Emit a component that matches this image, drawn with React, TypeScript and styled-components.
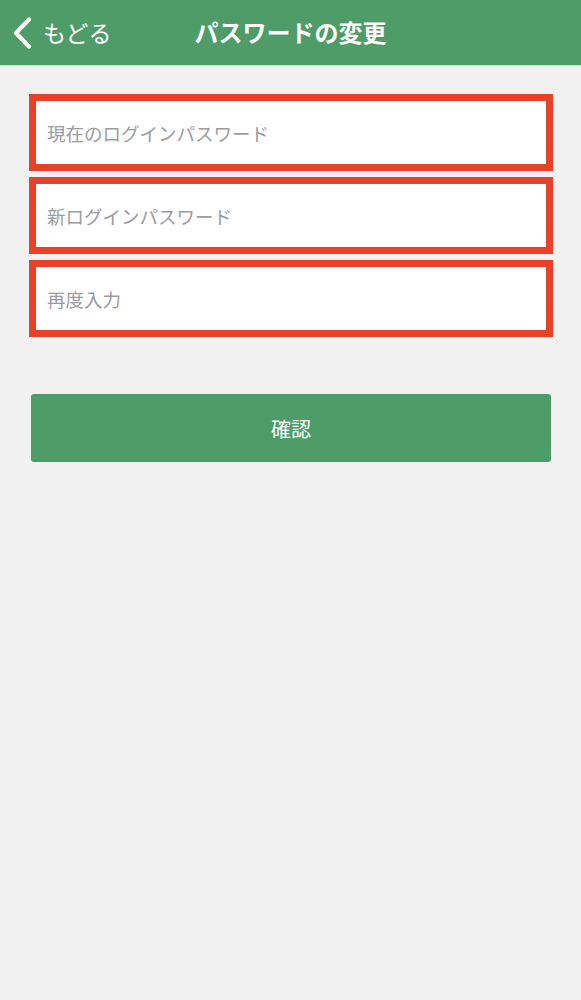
import React from 'react';
import styled, { createGlobalStyle } from 'styled-components';

const GlobalStyle = createGlobalStyle`
  html, body {
    margin: 0;
    padding: 0;
    background: #f1f1f1;
    font-family: "Noto Sans CJK JP", "Noto Sans", sans-serif;
  }
`;

const fields = ['現在のログインパスワード', '新ログインパスワード', '再度入力'];

const App: React.FC = () => {
  return (
    <>
      <GlobalStyle />
      <Page>
        <Header>
          <BackButton type="button">
            <svg width="22" height="32" viewBox="0 0 22 32" fill="none">
              <path d="M18 2.5 L5 16 L18 29.5" stroke="#fff" strokeWidth="4.2" strokeLinecap="round" strokeLinejoin="round" />
            </svg>
            <span>もどる</span>
          </BackButton>
          <Title>パスワードの変更</Title>
          <div />
        </Header>

        <Form>
          <FieldList>
            {fields.map((label) => (
              <Field key={label} type="password" placeholder={label} />
            ))}
          </FieldList>
          <SubmitButton type="button">確認</SubmitButton>
        </Form>
      </Page>
    </>
  );
};

export default App;

const Page = styled.div`
  min-height: 1000px;
  background: #f1f1f1;
`;

const Header = styled.header`
  height: 65px;
  background: #4e9d68;
  border-bottom: 1px solid #d4d4d4;
  display: grid;
  grid-template-columns: 1fr auto 1fr;
  align-items: center;
`;

const BackButton = styled.button`
  display: flex;
  align-items: center;
  gap: 10px;
  justify-self: start;
  padding: 0 0 0 11px;
  margin: 0;
  border: none;
  background: none;
  color: #fff;
  font-family: inherit;
  font-size: 23px;
  cursor: pointer;

  svg {
    display: block;
    margin-top: 1px;
  }

  span {
    line-height: 1;
    margin-top: -1px;
  }
`;

const Title = styled.h1`
  margin: 0;
  color: #fff;
  font-size: 24px;
  font-weight: bold;
  line-height: 1;
  margin-top: -1px;
`;

const Form = styled.div`
  padding: 28px 28px 0 29px;
`;

const FieldList = styled.div`
  display: flex;
  flex-direction: column;
  gap: 6px;
`;

const Field = styled.input`
  box-sizing: border-box;
  width: 100%;
  height: 77px;
  margin: 0;
  padding: 0 11px;
  border: 7px solid #e84127;
  background: #fff;
  font-family: inherit;
  font-size: 18.5px;
  color: #333;
  outline: none;

  &::placeholder {
    color: #9b9ba2;
  }
`;

const SubmitButton = styled.button`
  display: block;
  width: calc(100% - 4px);
  height: 68px;
  margin: 57px 0 0 2px;
  border: none;
  border-radius: 3px;
  background: #4e9c68;
  color: #fff;
  font-family: inherit;
  font-size: 20px;
  cursor: pointer;
`;
